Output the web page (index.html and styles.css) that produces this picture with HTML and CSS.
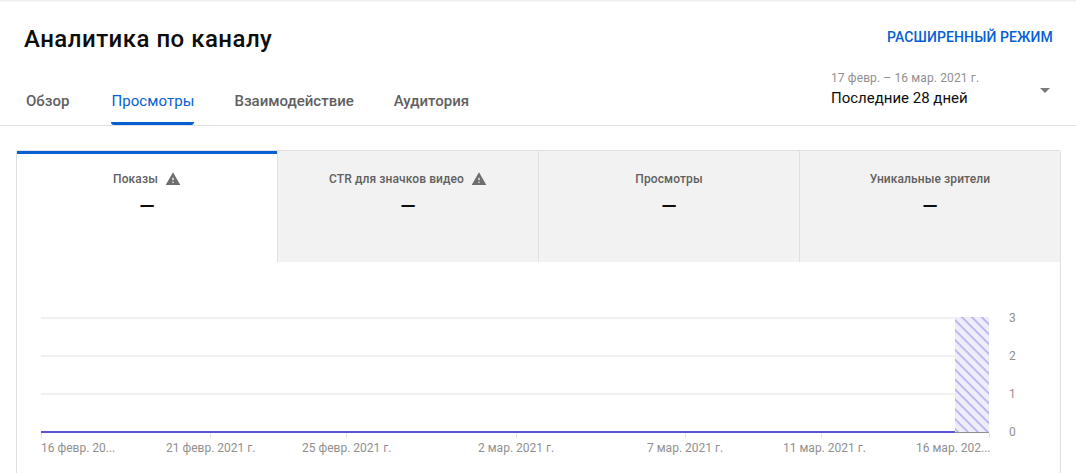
FILE: index.html
```html
<!DOCTYPE html>
<html lang="ru">
<head>
    <meta charset="UTF-8">
    <meta name="viewport" content="width=device-width, initial-scale=1.0">
    <title>Аналитика по каналу</title>
    <link rel="stylesheet" href="styles.css">
</head>
<body>

<header class="page-header">
    <div class="title-row">
        <h1 class="page-title">Аналитика по каналу</h1>
        <a class="advanced-link">РАСШИРЕННЫЙ РЕЖИМ</a>
    </div>
    <div class="nav-row">
        <nav class="tabs">
            <a class="tab tab-first">Обзор</a>
            <a class="tab tab-active">Просмотры</a>
            <a class="tab">Взаимодействие</a>
            <a class="tab">Аудитория</a>
        </nav>
        <div class="date-picker">
            <div class="date-text">
                <div class="date-range">17 февр. – 16 мар. 2021 г.</div>
                <div class="date-label">Последние 28 дней</div>
            </div>
            <span class="date-arrow"></span>
        </div>
    </div>
</header>

<main class="container">
    <section class="card">
        <div class="metrics">
            <div class="metric metric-active">
                <div class="metric-name">Показы
                    <svg class="warn-icon" viewBox="0 0 24 24"><path d="M1 21h22L12 2 1 21zm12-3h-2v-2h2v2zm0-4h-2v-4h2v4z"/></svg>
                </div>
                <div class="metric-value">—</div>
            </div>
            <div class="metric">
                <div class="metric-name">CTR для значков видео
                    <svg class="warn-icon" viewBox="0 0 24 24"><path d="M1 21h22L12 2 1 21zm12-3h-2v-2h2v2zm0-4h-2v-4h2v4z"/></svg>
                </div>
                <div class="metric-value">—</div>
            </div>
            <div class="metric">
                <div class="metric-name">Просмотры</div>
                <div class="metric-value">—</div>
            </div>
            <div class="metric">
                <div class="metric-name">Уникальные зрители</div>
                <div class="metric-value">—</div>
            </div>
        </div>

        <svg class="chart" width="1043" height="200" viewBox="0 0 1043 200">
            <defs>
                <pattern id="hatch" width="7" height="7" patternUnits="userSpaceOnUse" patternTransform="rotate(45)">
                    <rect width="7" height="7" fill="#eeedfb"/>
                    <rect width="7" height="1.5" fill="#b0a9ec"/>
                </pattern>
            </defs>
            <g class="grid">
                <rect x="24" y="55" width="948" height="2"/>
                <rect x="24" y="93" width="948" height="2"/>
                <rect x="24" y="131" width="948" height="2"/>
            </g>
            <rect x="938" y="55" width="34" height="115" fill="url(#hatch)"/>
            <g class="ticks">
                <rect x="24" y="171" width="1" height="5"/>
                <rect x="193" y="171" width="1" height="5"/>
                <rect x="329" y="171" width="1" height="5"/>
                <rect x="499" y="171" width="1" height="5"/>
                <rect x="668" y="171" width="1" height="5"/>
                <rect x="804" y="171" width="1" height="5"/>
                <rect x="972" y="171" width="1" height="5"/>
            </g>
            <rect x="24" y="169" width="914" height="2" fill="#5b52d6"/>
            <rect x="938" y="170" width="34" height="1" fill="#909090"/>
            <g class="axis-y">
                <text x="992" y="60">3</text>
                <text x="992" y="98">2</text>
                <text x="992" y="136">1</text>
                <text x="992" y="174">0</text>
            </g>
            <g class="axis-x">
                <text x="24" y="190">16 февр. 20...</text>
                <text x="149" y="190">21 февр. 2021 г.</text>
                <text x="285" y="190">25 февр. 2021 г.</text>
                <text x="461" y="190">2 мар. 2021 г.</text>
                <text x="630" y="190">7 мар. 2021 г.</text>
                <text x="766" y="190">11 мар. 2021 г.</text>
                <text x="899" y="190">16 мар. 202...</text>
            </g>
        </svg>
    </section>
</main>

</body>
</html>
```

FILE: styles.css
```css
:root {
    --primary-color: #065fd4;
    --border-color: #e0e0e0;
    --text-color: #606060;
    --font-family: Roboto, "Liberation Sans", sans-serif;
}
html, body {
    height: 473px;
    overflow: hidden;
}
body {
    font-family: var(--font-family);
    background-color: #fff;
    color: #0d0d0d;
    margin: 0;
    padding: 0;
    box-shadow: inset 0 2px 2px -1px #e8e8e8;
}
.page-header {
    height: 125px;
    border-bottom: 1px solid var(--border-color);
}
.title-row {
    display: flex;
    justify-content: space-between;
    align-items: center;
    padding: 24px 23px 0 24px;
    height: 30px;
}
.page-title {
    font-size: 24px;
    font-weight: 500;
    letter-spacing: 0.48px;
    line-height: 30px;
    margin: 0;
}
.advanced-link {
    color: var(--primary-color);
    font-size: 14px;
    font-weight: 500;
    letter-spacing: 0.12px;
    margin-top: -5px;
}
.nav-row {
    display: flex;
    justify-content: space-between;
    padding: 17px 24px 0 26px;
}
.tabs {
    display: flex;
    gap: 40px;
}
.tab {
    color: var(--text-color);
    font-size: 15px;
    font-weight: 500;
    line-height: 20px;
    padding-top: 20px;
    height: 31px;
    border-bottom: 3px solid transparent;
}
.tab-first {
    padding-right: 2px;
}
.tab-active {
    color: var(--primary-color);
    border-bottom-color: var(--primary-color);
    border-radius: 3px;
    font-weight: 400;
    letter-spacing: 0.08px;
}
.date-picker {
    display: flex;
    width: 221px;
    justify-content: space-between;
    align-items: flex-start;
    margin-top: -1px;
}
.date-range {
    color: #909090;
    font-size: 12px;
    letter-spacing: 0.12px;
    line-height: 16px;
}
.date-label {
    font-size: 15px;
    line-height: 22px;
    margin-top: 1px;
}
.date-arrow {
    width: 0;
    height: 0;
    border-left: 5px solid transparent;
    border-right: 5px solid transparent;
    border-top: 5px solid #7a7a7a;
    margin: 18px 2px 0 0;
}
.container {
    padding: 24px 15px 0 16px;
}
.card {
    border: 1px solid var(--border-color);
    border-bottom: none;
    border-radius: 3px 3px 0 0;
    height: 330px;
}
.metrics {
    display: flex;
    height: 111px;
}
.metric {
    flex: 1;
    background-color: #f2f2f2;
    border-left: 1px solid var(--border-color);
    text-align: center;
    padding-top: 20px;
}
.metric-active {
    background-color: #fff;
    border-left: none;
    border-top: 3px solid var(--primary-color);
    padding-top: 17px;
}
.metric-name {
    color: var(--text-color);
    font-size: 12px;
    font-weight: 500;
    letter-spacing: 0.1px;
    line-height: 16px;
    display: flex;
    justify-content: center;
    align-items: center;
    gap: 7px;
}
.warn-icon {
    width: 16px;
    height: 16px;
    fill: #6e6e6e;
}
.metric-value {
    font-size: 20px;
    font-weight: 500;
    line-height: 28px;
    margin-top: 5px;
}
.chart {
    display: block;
}
.grid rect {
    fill: #f1f1f1;
}
.ticks rect {
    fill: #e4e4e4;
}
.axis-y text, .axis-x text {
    font-family: var(--font-family);
    font-size: 12px;
    fill: #909090;
}
```
